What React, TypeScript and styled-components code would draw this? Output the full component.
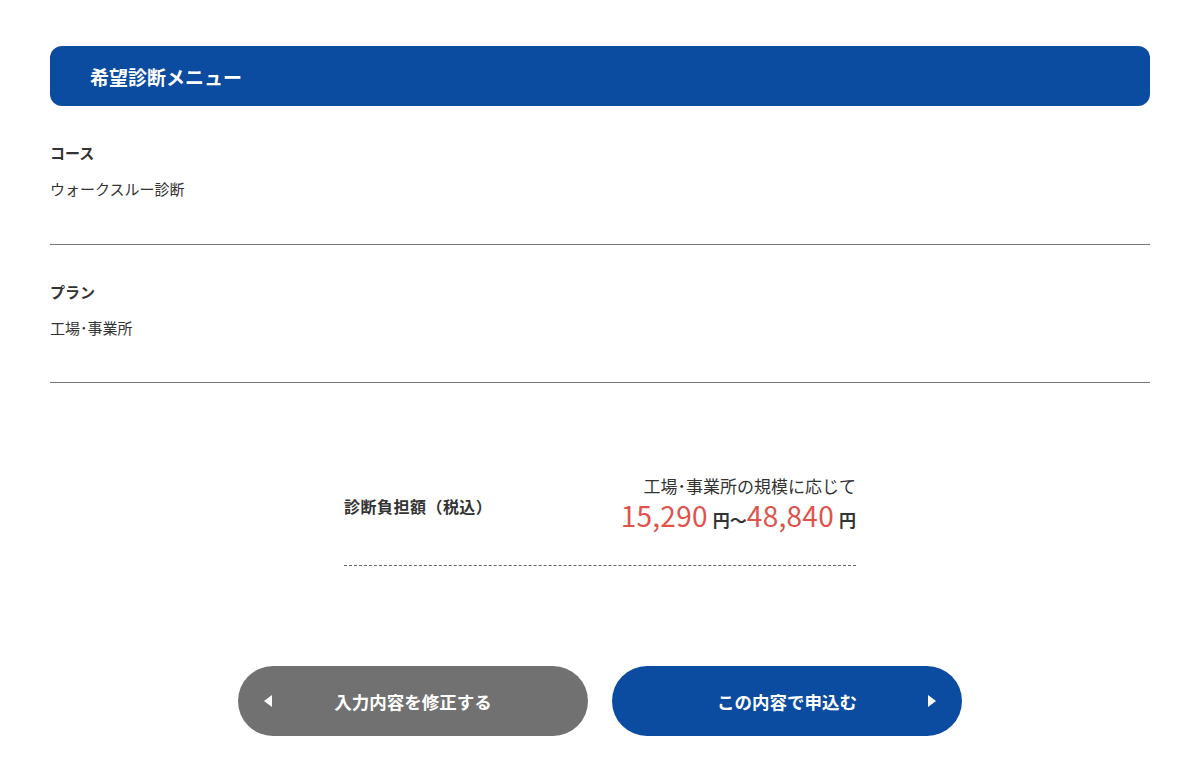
import React from "react";
import styled, { createGlobalStyle } from "styled-components";

const GlobalStyle = createGlobalStyle`
  body {
    margin: 0;
    background: #fff;
    color: #333;
    font-family: "Noto Sans CJK JP", "Noto Sans", sans-serif;
  }
`;

const Page = styled.main`
  padding: 46px 50px 40px;
`;

const TitleBar = styled.h2`
  margin: 0;
  height: 60px;
  display: flex;
  align-items: center;
  padding: 0 40px;
  border-radius: 12px;
  background: #0b4ca0;
  color: #fff;
  font-size: 19px;
  font-weight: 700;
`;

const Field = styled.section`
  padding: 35px 0 43.5px;
  border-bottom: 1px solid #777;
`;

const FieldLabel = styled.h3`
  margin: 0 0 13px;
  font-size: 15px;
  line-height: 24px;
  font-weight: 700;
  color: #333;
`;

const FieldValue = styled.p`
  margin: 0;
  font-size: 15px;
  line-height: 22px;
  color: #333;
`;

const Price = styled.div`
  width: 512px;
  margin: 91px auto 0;
  padding-bottom: 29px;
  border-bottom: 1px dashed #666;
  display: flex;
  justify-content: space-between;
  align-items: center;
`;

const PriceLabel = styled.div`
  font-size: 16px;
  font-weight: 700;
  padding-top: 2px;
  letter-spacing: 0.03em;
`;

const PriceDetail = styled.div`
  text-align: right;
`;

const PriceNote = styled.div`
  font-size: 17px;
  line-height: 24px;
`;

const PriceRange = styled.div`
  margin-top: 3px;
  font-size: 17px;
  line-height: 35px;
  height: 35px;
  font-weight: 700;
`;

const Amount = styled.span`
  font-size: 28px;
  line-height: 1;
  font-weight: 400;
  color: #e0534b;
  margin-right: 5px;
  letter-spacing: 0.01em;
`;

const Actions = styled.div`
  display: flex;
  justify-content: center;
  gap: 24px;
  margin-top: 100px;
`;

const Button = styled.button<{ $tone: "back" | "submit" }>`
  width: 350px;
  height: 70px;
  border: 0;
  border-radius: 35px;
  padding: 0 26px;
  display: grid;
  grid-template-columns: 1fr auto 1fr;
  align-items: center;
  background: ${(p) => (p.$tone === "back" ? "#717171" : "#0b4ca0")};
  color: #fff;
  font-family: inherit;
  font-size: 17.5px;
  font-weight: 700;
  cursor: pointer;
`;

const Arrow = styled.svg<{ $side: "left" | "right" }>`
  justify-self: ${(p) => (p.$side === "left" ? "start" : "end")};
  grid-column: ${(p) => (p.$side === "left" ? 1 : 3)};
  grid-row: 1;
`;

const ButtonText = styled.span`
  grid-column: 2;
  grid-row: 1;
`;

export default function App() {
  return (
    <>
      <GlobalStyle />
      <Page>
        <TitleBar>希望診断メニュー</TitleBar>
        <Field>
          <FieldLabel>コース</FieldLabel>
          <FieldValue>ウォークスルー診断</FieldValue>
        </Field>
        <Field>
          <FieldLabel>プラン</FieldLabel>
          <FieldValue>工場･事業所</FieldValue>
        </Field>
        <Price>
          <PriceLabel>診断負担額（税込）</PriceLabel>
          <PriceDetail>
            <PriceNote>工場･事業所の規模に応じて</PriceNote>
            <PriceRange>
              <Amount>15,290</Amount>円～<Amount>48,840</Amount>円
            </PriceRange>
          </PriceDetail>
        </Price>
        <Actions>
          <Button $tone="back">
            <Arrow $side="left" width="8" height="12" viewBox="0 0 8 12">
              <path d="M8 0 L0 6 L8 12 Z" fill="#fff" />
            </Arrow>
            <ButtonText>入力内容を修正する</ButtonText>
          </Button>
          <Button $tone="submit">
            <ButtonText>この内容で申込む</ButtonText>
            <Arrow $side="right" width="8" height="12" viewBox="0 0 8 12">
              <path d="M0 0 L8 6 L0 12 Z" fill="#fff" />
            </Arrow>
          </Button>
        </Actions>
      </Page>
    </>
  );
}
